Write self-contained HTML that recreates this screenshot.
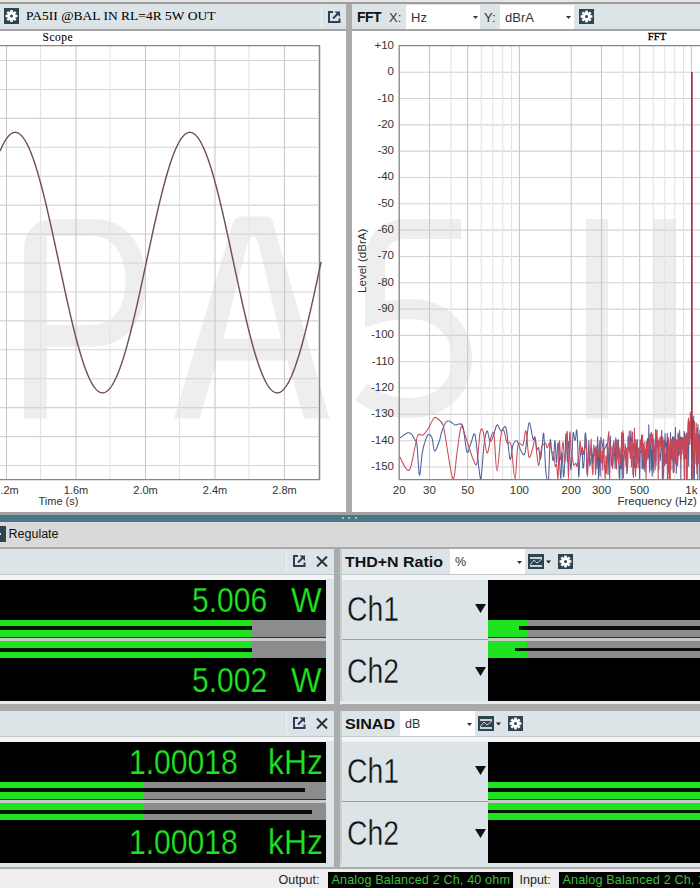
<!DOCTYPE html><html><head><meta charset="utf-8"><style>html,body{margin:0;padding:0;width:700px;height:888px;overflow:hidden;background:#dde4e7;position:relative}div{box-sizing:border-box}</style></head><body>
<div style="position:absolute;left:0px;top:0px;width:700px;height:1.5px;background:#e6e6e6;"></div>
<div style="position:absolute;left:0px;top:1.5px;width:700px;height:2.5px;background:#9d9d9d;"></div>
<div style="position:absolute;left:0px;top:4px;width:346px;height:25px;background:#dde4e7;"></div>
<div style="position:absolute;left:352px;top:4px;width:348px;height:25px;background:#dde4e7;"></div>
<div style="position:absolute;left:0px;top:29px;width:700px;height:2px;background:#a3a3a3;"></div>
<svg style="position:absolute;left:4px;top:8px" width="15" height="16" viewBox="0 0 15 16"><rect width="15" height="16" fill="#2d4451"/><rect x="6.20" y="2.10" width="2.6" height="3" fill="#fff" transform="rotate(0 7.5 8.0)"/><rect x="6.20" y="2.10" width="2.6" height="3" fill="#fff" transform="rotate(45 7.5 8.0)"/><rect x="6.20" y="2.10" width="2.6" height="3" fill="#fff" transform="rotate(90 7.5 8.0)"/><rect x="6.20" y="2.10" width="2.6" height="3" fill="#fff" transform="rotate(135 7.5 8.0)"/><rect x="6.20" y="2.10" width="2.6" height="3" fill="#fff" transform="rotate(180 7.5 8.0)"/><rect x="6.20" y="2.10" width="2.6" height="3" fill="#fff" transform="rotate(225 7.5 8.0)"/><rect x="6.20" y="2.10" width="2.6" height="3" fill="#fff" transform="rotate(270 7.5 8.0)"/><rect x="6.20" y="2.10" width="2.6" height="3" fill="#fff" transform="rotate(315 7.5 8.0)"/><circle cx="7.5" cy="8.0" r="4.2" fill="#fff"/><circle cx="7.5" cy="8.0" r="1.5" fill="#2d4451"/></svg>
<div style="position:absolute;left:26px;top:8.5px;font:13.5px 'Liberation Serif', serif;color:#000;white-space:nowrap;line-height:1;-webkit-text-stroke:0.05px #000">PA5II @BAL IN RL=4R 5W OUT</div>
<div style="position:absolute;left:321px;top:6px;width:1px;height:21px;background:#eef2f3;"></div>
<svg style="position:absolute;left:327.5px;top:10.5px" width="13" height="12" viewBox="0 0 13 12"><path d="M5,1 H1 V11 H11.5 V7.5" fill="none" stroke="#2b3f5a" stroke-width="2"/><path d="M5,7.5 L11,1.5" fill="none" stroke="#2b3f5a" stroke-width="2"/><path d="M6.5,0.5 H12 V6 Z" fill="#2b3f5a"/></svg>
<div style="position:absolute;left:357px;top:10px;font:bold 14px 'Liberation Sans', sans-serif;color:#111;white-space:nowrap;line-height:1;letter-spacing:-0.5px">FFT</div>
<div style="position:absolute;left:389px;top:10.5px;font:13px 'Liberation Sans', sans-serif;color:#333;white-space:nowrap;line-height:1;">X:</div>
<div style="position:absolute;left:406px;top:5px;width:74px;height:24px;background:#ffffff;"></div>
<div style="position:absolute;left:411px;top:11px;font:13px 'Liberation Sans', sans-serif;color:#333;white-space:nowrap;line-height:1;">Hz</div>
<svg style="position:absolute;left:473px;top:16px" width="5" height="3"><path d="M0,0H5L2.5,3Z" fill="#333"/></svg>
<div style="position:absolute;left:484px;top:10.5px;font:13px 'Liberation Sans', sans-serif;color:#333;white-space:nowrap;line-height:1;">Y:</div>
<div style="position:absolute;left:500px;top:5px;width:74px;height:24px;background:#ffffff;"></div>
<div style="position:absolute;left:505px;top:11px;font:13px 'Liberation Sans', sans-serif;color:#333;white-space:nowrap;line-height:1;">dBrA</div>
<svg style="position:absolute;left:566px;top:16px" width="5" height="3"><path d="M0,0H5L2.5,3Z" fill="#333"/></svg>
<svg style="position:absolute;left:579px;top:8.5px" width="15" height="15" viewBox="0 0 15 15"><rect width="15" height="15" fill="#2d4451"/><rect x="6.20" y="1.60" width="2.6" height="3" fill="#fff" transform="rotate(0 7.5 7.5)"/><rect x="6.20" y="1.60" width="2.6" height="3" fill="#fff" transform="rotate(45 7.5 7.5)"/><rect x="6.20" y="1.60" width="2.6" height="3" fill="#fff" transform="rotate(90 7.5 7.5)"/><rect x="6.20" y="1.60" width="2.6" height="3" fill="#fff" transform="rotate(135 7.5 7.5)"/><rect x="6.20" y="1.60" width="2.6" height="3" fill="#fff" transform="rotate(180 7.5 7.5)"/><rect x="6.20" y="1.60" width="2.6" height="3" fill="#fff" transform="rotate(225 7.5 7.5)"/><rect x="6.20" y="1.60" width="2.6" height="3" fill="#fff" transform="rotate(270 7.5 7.5)"/><rect x="6.20" y="1.60" width="2.6" height="3" fill="#fff" transform="rotate(315 7.5 7.5)"/><circle cx="7.5" cy="7.5" r="4.2" fill="#fff"/><circle cx="7.5" cy="7.5" r="1.5" fill="#2d4451"/></svg>
<div style="position:absolute;left:0px;top:31px;width:346px;height:481px;background:#ffffff;"></div>
<div style="position:absolute;left:352px;top:31px;width:348px;height:481px;background:#ffffff;"></div>
<div style="position:absolute;left:346px;top:4px;width:6px;height:508px;background:#a9abac;"></div>
<svg style="position:absolute;left:0;top:0" width="700" height="512" viewBox="0 0 700 512"><path fill="#eeeeee" fill-rule="evenodd" d="M24,418.5 V252 Q24,219 57,219 H94 C126,219 146,245 146,282.5 C146,320 126,346.5 94,346.5 H47 V418.5 Z M47,236 H92 C113,236 125.5,254 125.5,281 C125.5,308 113,325 92,325 H47 Z"/><path fill="#eeeeee" fill-rule="evenodd" d="M174,418.5 L233,222.5 Q235,216.6 242,216.6 L264,216.6 Q271,216.6 273,222.5 L329.5,418.5 L304,418.5 L287.3,360.5 L216.9,360.5 L199.5,418.5 Z M223.4,338.7 L248,241 Q253,232 258,241 L281,338.7 Z"/><g fill="none" stroke="#eeeeee" stroke-width="20"><path d="M461,229 H407 Q375,229 375,263 V314 C388,310 398,309 410,309 C441,309 462,330 462,358.5 C462,388 441,408 410,408 C390,408 373,401 361,392"/></g><rect x="586" y="219" width="22" height="199.5" fill="#eeeeee"/><rect x="653" y="219" width="23" height="199.5" fill="#eeeeee"/><line x1="0" y1="60.50" x2="319.6" y2="60.50" stroke="#d3d3d3" stroke-width="1.1"/><line x1="0" y1="89.43" x2="319.6" y2="89.43" stroke="#d3d3d3" stroke-width="1.1"/><line x1="0" y1="118.36" x2="319.6" y2="118.36" stroke="#d3d3d3" stroke-width="1.1"/><line x1="0" y1="147.29" x2="319.6" y2="147.29" stroke="#d3d3d3" stroke-width="1.1"/><line x1="0" y1="176.22" x2="319.6" y2="176.22" stroke="#d3d3d3" stroke-width="1.1"/><line x1="0" y1="205.15" x2="319.6" y2="205.15" stroke="#d3d3d3" stroke-width="1.1"/><line x1="0" y1="234.08" x2="319.6" y2="234.08" stroke="#d3d3d3" stroke-width="1.1"/><line x1="0" y1="263.01" x2="319.6" y2="263.01" stroke="#d3d3d3" stroke-width="1.1"/><line x1="0" y1="291.94" x2="319.6" y2="291.94" stroke="#d3d3d3" stroke-width="1.1"/><line x1="0" y1="320.87" x2="319.6" y2="320.87" stroke="#d3d3d3" stroke-width="1.1"/><line x1="0" y1="349.80" x2="319.6" y2="349.80" stroke="#d3d3d3" stroke-width="1.1"/><line x1="0" y1="378.73" x2="319.6" y2="378.73" stroke="#d3d3d3" stroke-width="1.1"/><line x1="0" y1="407.66" x2="319.6" y2="407.66" stroke="#d3d3d3" stroke-width="1.1"/><line x1="0" y1="436.59" x2="319.6" y2="436.59" stroke="#d3d3d3" stroke-width="1.1"/><line x1="0" y1="465.52" x2="319.6" y2="465.52" stroke="#d3d3d3" stroke-width="1.1"/><line x1="6.50" y1="45.7" x2="6.50" y2="479.6" stroke="#c9c9c9" stroke-width="1.1"/><line x1="40.50" y1="45.7" x2="40.50" y2="479.6" stroke="#e3e3e3" stroke-width="1.1"/><line x1="76.00" y1="45.7" x2="76.00" y2="479.6" stroke="#c9c9c9" stroke-width="1.1"/><line x1="110.00" y1="45.7" x2="110.00" y2="479.6" stroke="#e3e3e3" stroke-width="1.1"/><line x1="145.50" y1="45.7" x2="145.50" y2="479.6" stroke="#c9c9c9" stroke-width="1.1"/><line x1="179.50" y1="45.7" x2="179.50" y2="479.6" stroke="#e3e3e3" stroke-width="1.1"/><line x1="215.00" y1="45.7" x2="215.00" y2="479.6" stroke="#c9c9c9" stroke-width="1.1"/><line x1="249.00" y1="45.7" x2="249.00" y2="479.6" stroke="#e3e3e3" stroke-width="1.1"/><line x1="284.50" y1="45.7" x2="284.50" y2="479.6" stroke="#c9c9c9" stroke-width="1.1"/><line x1="318.50" y1="45.7" x2="318.50" y2="479.6" stroke="#e3e3e3" stroke-width="1.1"/><path d="M0,45.7 H319.6 V479.6 H0" fill="none" stroke="#858585" stroke-width="1.3"/><polyline points="0.0,151.09 0.5,149.90 1.0,148.74 1.5,147.62 2.0,146.54 2.5,145.50 3.0,144.49 3.5,143.52 4.0,142.59 4.5,141.70 5.0,140.85 5.5,140.04 6.0,139.26 6.5,138.53 7.0,137.84 7.5,137.19 8.0,136.57 8.5,136.00 9.0,135.47 9.5,134.98 10.0,134.53 10.5,134.13 11.0,133.76 11.5,133.44 12.0,133.16 12.5,132.92 13.0,132.72 13.5,132.57 14.0,132.45 14.5,132.38 15.0,132.35 15.5,132.36 16.0,132.42 16.5,132.52 17.0,132.65 17.5,132.83 18.0,133.06 18.5,133.32 19.0,133.63 19.5,133.98 20.0,134.37 20.5,134.80 21.0,135.27 21.5,135.79 22.0,136.34 22.5,136.94 23.0,137.57 23.5,138.25 24.0,138.97 24.5,139.72 25.0,140.52 25.5,141.36 26.0,142.23 26.5,143.15 27.0,144.10 27.5,145.09 28.0,146.12 28.5,147.19 29.0,148.29 29.5,149.43 30.0,150.61 30.5,151.82 31.0,153.07 31.5,154.36 32.0,155.68 32.5,157.03 33.0,158.42 33.5,159.84 34.0,161.30 34.5,162.79 35.0,164.31 35.5,165.86 36.0,167.45 36.5,169.06 37.0,170.71 37.5,172.38 38.0,174.09 38.5,175.82 39.0,177.58 39.5,179.37 40.0,181.18 40.5,183.02 41.0,184.89 41.5,186.78 42.0,188.70 42.5,190.64 43.0,192.60 43.5,194.59 44.0,196.60 44.5,198.63 45.0,200.68 45.5,202.75 46.0,204.84 46.5,206.95 47.0,209.07 47.5,211.22 48.0,213.38 48.5,215.55 49.0,217.75 49.5,219.95 50.0,222.17 50.5,224.41 51.0,226.65 51.5,228.91 52.0,231.18 52.5,233.45 53.0,235.74 53.5,238.04 54.0,240.34 54.5,242.65 55.0,244.97 55.5,247.29 56.0,249.62 56.5,251.95 57.0,254.29 57.5,256.63 58.0,258.97 58.5,261.31 59.0,263.65 59.5,266.00 60.0,268.34 60.5,270.68 61.0,273.01 61.5,275.34 62.0,277.67 62.5,280.00 63.0,282.32 63.5,284.63 64.0,286.93 64.5,289.23 65.0,291.52 65.5,293.80 66.0,296.07 66.5,298.32 67.0,300.57 67.5,302.80 68.0,305.03 68.5,307.23 69.0,309.43 69.5,311.60 70.0,313.77 70.5,315.91 71.0,318.04 71.5,320.15 72.0,322.24 72.5,324.32 73.0,326.37 73.5,328.40 74.0,330.41 74.5,332.40 75.0,334.37 75.5,336.31 76.0,338.23 76.5,340.12 77.0,341.99 77.5,343.84 78.0,345.65 78.5,347.44 79.0,349.21 79.5,350.94 80.0,352.65 80.5,354.33 81.0,355.98 81.5,357.59 82.0,359.18 82.5,360.74 83.0,362.26 83.5,363.75 84.0,365.21 84.5,366.64 85.0,368.03 85.5,369.39 86.0,370.71 86.5,372.00 87.0,373.25 87.5,374.47 88.0,375.65 88.5,376.80 89.0,377.91 89.5,378.98 90.0,380.01 90.5,381.00 91.0,381.96 91.5,382.88 92.0,383.76 92.5,384.60 93.0,385.40 93.5,386.16 94.0,386.88 94.5,387.56 95.0,388.20 95.5,388.80 96.0,389.36 96.5,389.88 97.0,390.36 97.5,390.79 98.0,391.19 98.5,391.54 99.0,391.85 99.5,392.12 100.0,392.34 100.5,392.53 101.0,392.67 101.5,392.77 102.0,392.83 102.5,392.85 103.0,392.82 103.5,392.76 104.0,392.65 104.5,392.50 105.0,392.30 105.5,392.07 106.0,391.79 106.5,391.47 107.0,391.11 107.5,390.71 108.0,390.26 108.5,389.78 109.0,389.25 109.5,388.69 110.0,388.08 110.5,387.43 111.0,386.74 111.5,386.01 112.0,385.24 112.5,384.43 113.0,383.59 113.5,382.70 114.0,381.77 114.5,380.81 115.0,379.81 115.5,378.77 116.0,377.69 116.5,376.57 117.0,375.42 117.5,374.23 118.0,373.01 118.5,371.75 119.0,370.45 119.5,369.12 120.0,367.75 120.5,366.35 121.0,364.92 121.5,363.46 122.0,361.96 122.5,360.43 123.0,358.87 123.5,357.27 124.0,355.65 124.5,353.99 125.0,352.31 125.5,350.60 126.0,348.86 126.5,347.09 127.0,345.29 127.5,343.47 128.0,341.62 128.5,339.75 129.0,337.85 129.5,335.92 130.0,333.97 130.5,332.00 131.0,330.01 131.5,328.00 132.0,325.96 132.5,323.90 133.0,321.83 133.5,319.73 134.0,317.62 134.5,315.48 135.0,313.34 135.5,311.17 136.0,308.99 136.5,306.79 137.0,304.58 137.5,302.36 138.0,300.12 138.5,297.87 139.0,295.61 139.5,293.34 140.0,291.06 140.5,288.77 141.0,286.47 141.5,284.17 142.0,281.85 142.5,279.53 143.0,277.21 143.5,274.88 144.0,272.54 144.5,270.21 145.0,267.87 145.5,265.53 146.0,263.19 146.5,260.84 147.0,258.50 147.5,256.16 148.0,253.82 148.5,251.49 149.0,249.16 149.5,246.83 150.0,244.51 150.5,242.19 151.0,239.88 151.5,237.58 152.0,235.28 152.5,233.00 153.0,230.72 153.5,228.46 154.0,226.20 154.5,223.96 155.0,221.73 155.5,219.51 156.0,217.31 156.5,215.12 157.0,212.94 157.5,210.79 158.0,208.65 158.5,206.52 159.0,204.42 159.5,202.33 160.0,200.27 160.5,198.22 161.0,196.19 161.5,194.19 162.0,192.21 162.5,190.25 163.0,188.31 163.5,186.40 164.0,184.51 164.5,182.65 165.0,180.82 165.5,179.01 166.0,177.22 166.5,175.47 167.0,173.74 167.5,172.04 168.0,170.38 168.5,168.74 169.0,167.13 169.5,165.55 170.0,164.00 170.5,162.49 171.0,161.01 171.5,159.56 172.0,158.14 172.5,156.76 173.0,155.41 173.5,154.10 174.0,152.82 174.5,151.58 175.0,150.37 175.5,149.20 176.0,148.07 176.5,146.97 177.0,145.91 177.5,144.89 178.0,143.90 178.5,142.96 179.0,142.05 179.5,141.19 180.0,140.36 180.5,139.57 181.0,138.82 181.5,138.11 182.0,137.44 182.5,136.81 183.0,136.23 183.5,135.68 184.0,135.17 184.5,134.71 185.0,134.29 185.5,133.90 186.0,133.56 186.5,133.27 187.0,133.01 187.5,132.80 188.0,132.62 188.5,132.49 189.0,132.40 189.5,132.36 190.0,132.35 190.5,132.39 191.0,132.47 191.5,132.59 192.0,132.76 192.5,132.96 193.0,133.21 193.5,133.50 194.0,133.83 194.5,134.21 195.0,134.62 195.5,135.08 196.0,135.57 196.5,136.11 197.0,136.69 197.5,137.31 198.0,137.97 198.5,138.67 199.0,139.42 199.5,140.20 200.0,141.02 200.5,141.88 201.0,142.78 201.5,143.71 202.0,144.69 202.5,145.70 203.0,146.75 203.5,147.84 204.0,148.97 204.5,150.13 205.0,151.33 205.5,152.57 206.0,153.84 206.5,155.15 207.0,156.49 207.5,157.86 208.0,159.27 208.5,160.71 209.0,162.19 209.5,163.70 210.0,165.24 210.5,166.81 211.0,168.41 211.5,170.05 212.0,171.71 212.5,173.40 213.0,175.12 213.5,176.87 214.0,178.65 214.5,180.45 215.0,182.28 215.5,184.14 216.0,186.02 216.5,187.93 217.0,189.86 217.5,191.81 218.0,193.79 218.5,195.79 219.0,197.81 219.5,199.86 220.0,201.92 220.5,204.00 221.0,206.10 221.5,208.22 222.0,210.36 222.5,212.51 223.0,214.68 223.5,216.87 224.0,219.07 224.5,221.28 225.0,223.51 225.5,225.75 226.0,228.00 226.5,230.27 227.0,232.54 227.5,234.82 228.0,237.12 228.5,239.42 229.0,241.73 229.5,244.04 230.0,246.36 230.5,248.69 231.0,251.02 231.5,253.36 232.0,255.69 232.5,258.03 233.0,260.37 233.5,262.72 234.0,265.06 234.5,267.40 235.0,269.74 235.5,272.08 236.0,274.41 236.5,276.74 237.0,279.07 237.5,281.39 238.0,283.70 238.5,286.01 239.0,288.31 239.5,290.60 240.0,292.89 240.5,295.16 241.0,297.42 241.5,299.67 242.0,301.91 242.5,304.14 243.0,306.35 243.5,308.55 244.0,310.74 244.5,312.90 245.0,315.06 245.5,317.19 246.0,319.31 246.5,321.41 247.0,323.49 247.5,325.55 248.0,327.59 248.5,329.61 249.0,331.61 249.5,333.58 250.0,335.53 250.5,337.46 251.0,339.37 251.5,341.25 252.0,343.10 252.5,344.93 253.0,346.73 253.5,348.51 254.0,350.25 254.5,351.97 255.0,353.66 255.5,355.32 256.0,356.95 256.5,358.55 257.0,360.12 257.5,361.65 258.0,363.16 258.5,364.63 259.0,366.07 259.5,367.48 260.0,368.85 260.5,370.19 261.0,371.49 261.5,372.76 262.0,373.99 262.5,375.18 263.0,376.34 263.5,377.47 264.0,378.55 264.5,379.60 265.0,380.61 265.5,381.58 266.0,382.52 266.5,383.41 267.0,384.27 267.5,385.08 268.0,385.86 268.5,386.60 269.0,387.29 269.5,387.95 270.0,388.57 270.5,389.14 271.0,389.68 271.5,390.17 272.0,390.62 272.5,391.03 273.0,391.40 273.5,391.73 274.0,392.02 274.5,392.26 275.0,392.46 275.5,392.62 276.0,392.74 276.5,392.81 277.0,392.85 277.5,392.84 278.0,392.79 278.5,392.70 279.0,392.56 279.5,392.39 280.0,392.17 280.5,391.91 281.0,391.60 281.5,391.26 282.0,390.87 282.5,390.45 283.0,389.98 283.5,389.47 284.0,388.92 284.5,388.33 285.0,387.69 285.5,387.02 286.0,386.31 286.5,385.55 287.0,384.76 287.5,383.93 288.0,383.06 288.5,382.15 289.0,381.20 289.5,380.21 290.0,379.19 290.5,378.12 291.0,377.02 291.5,375.88 292.0,374.71 292.5,373.50 293.0,372.25 293.5,370.97 294.0,369.66 294.5,368.30 295.0,366.92 295.5,365.50 296.0,364.05 296.5,362.56 297.0,361.04 297.5,359.49 298.0,357.91 298.5,356.30 299.0,354.66 299.5,352.99 300.0,351.29 300.5,349.56 301.0,347.80 301.5,346.01 302.0,344.20 302.5,342.36 303.0,340.50 303.5,338.61 304.0,336.69 304.5,334.76 305.0,332.79 305.5,330.81 306.0,328.80 306.5,326.78 307.0,324.73 307.5,322.66 308.0,320.57 308.5,318.46 309.0,316.34 309.5,314.20 310.0,312.04 310.5,309.86 311.0,307.67 311.5,305.47 312.0,303.25 312.5,301.02 313.0,298.77 313.5,296.52 314.0,294.25 314.5,291.97 315.0,289.69 315.5,287.39 316.0,285.09 316.5,282.78 317.0,280.46 317.5,278.14 318.0,275.81 318.5,273.48 319.0,271.14 319.5,268.80 320.0,266.46 320.5,264.12 321.0,261.78" fill="none" stroke="#b08890" stroke-width="0.8" transform="translate(0.5,0)"/><polyline points="0.0,151.09 0.5,149.90 1.0,148.74 1.5,147.62 2.0,146.54 2.5,145.50 3.0,144.49 3.5,143.52 4.0,142.59 4.5,141.70 5.0,140.85 5.5,140.04 6.0,139.26 6.5,138.53 7.0,137.84 7.5,137.19 8.0,136.57 8.5,136.00 9.0,135.47 9.5,134.98 10.0,134.53 10.5,134.13 11.0,133.76 11.5,133.44 12.0,133.16 12.5,132.92 13.0,132.72 13.5,132.57 14.0,132.45 14.5,132.38 15.0,132.35 15.5,132.36 16.0,132.42 16.5,132.52 17.0,132.65 17.5,132.83 18.0,133.06 18.5,133.32 19.0,133.63 19.5,133.98 20.0,134.37 20.5,134.80 21.0,135.27 21.5,135.79 22.0,136.34 22.5,136.94 23.0,137.57 23.5,138.25 24.0,138.97 24.5,139.72 25.0,140.52 25.5,141.36 26.0,142.23 26.5,143.15 27.0,144.10 27.5,145.09 28.0,146.12 28.5,147.19 29.0,148.29 29.5,149.43 30.0,150.61 30.5,151.82 31.0,153.07 31.5,154.36 32.0,155.68 32.5,157.03 33.0,158.42 33.5,159.84 34.0,161.30 34.5,162.79 35.0,164.31 35.5,165.86 36.0,167.45 36.5,169.06 37.0,170.71 37.5,172.38 38.0,174.09 38.5,175.82 39.0,177.58 39.5,179.37 40.0,181.18 40.5,183.02 41.0,184.89 41.5,186.78 42.0,188.70 42.5,190.64 43.0,192.60 43.5,194.59 44.0,196.60 44.5,198.63 45.0,200.68 45.5,202.75 46.0,204.84 46.5,206.95 47.0,209.07 47.5,211.22 48.0,213.38 48.5,215.55 49.0,217.75 49.5,219.95 50.0,222.17 50.5,224.41 51.0,226.65 51.5,228.91 52.0,231.18 52.5,233.45 53.0,235.74 53.5,238.04 54.0,240.34 54.5,242.65 55.0,244.97 55.5,247.29 56.0,249.62 56.5,251.95 57.0,254.29 57.5,256.63 58.0,258.97 58.5,261.31 59.0,263.65 59.5,266.00 60.0,268.34 60.5,270.68 61.0,273.01 61.5,275.34 62.0,277.67 62.5,280.00 63.0,282.32 63.5,284.63 64.0,286.93 64.5,289.23 65.0,291.52 65.5,293.80 66.0,296.07 66.5,298.32 67.0,300.57 67.5,302.80 68.0,305.03 68.5,307.23 69.0,309.43 69.5,311.60 70.0,313.77 70.5,315.91 71.0,318.04 71.5,320.15 72.0,322.24 72.5,324.32 73.0,326.37 73.5,328.40 74.0,330.41 74.5,332.40 75.0,334.37 75.5,336.31 76.0,338.23 76.5,340.12 77.0,341.99 77.5,343.84 78.0,345.65 78.5,347.44 79.0,349.21 79.5,350.94 80.0,352.65 80.5,354.33 81.0,355.98 81.5,357.59 82.0,359.18 82.5,360.74 83.0,362.26 83.5,363.75 84.0,365.21 84.5,366.64 85.0,368.03 85.5,369.39 86.0,370.71 86.5,372.00 87.0,373.25 87.5,374.47 88.0,375.65 88.5,376.80 89.0,377.91 89.5,378.98 90.0,380.01 90.5,381.00 91.0,381.96 91.5,382.88 92.0,383.76 92.5,384.60 93.0,385.40 93.5,386.16 94.0,386.88 94.5,387.56 95.0,388.20 95.5,388.80 96.0,389.36 96.5,389.88 97.0,390.36 97.5,390.79 98.0,391.19 98.5,391.54 99.0,391.85 99.5,392.12 100.0,392.34 100.5,392.53 101.0,392.67 101.5,392.77 102.0,392.83 102.5,392.85 103.0,392.82 103.5,392.76 104.0,392.65 104.5,392.50 105.0,392.30 105.5,392.07 106.0,391.79 106.5,391.47 107.0,391.11 107.5,390.71 108.0,390.26 108.5,389.78 109.0,389.25 109.5,388.69 110.0,388.08 110.5,387.43 111.0,386.74 111.5,386.01 112.0,385.24 112.5,384.43 113.0,383.59 113.5,382.70 114.0,381.77 114.5,380.81 115.0,379.81 115.5,378.77 116.0,377.69 116.5,376.57 117.0,375.42 117.5,374.23 118.0,373.01 118.5,371.75 119.0,370.45 119.5,369.12 120.0,367.75 120.5,366.35 121.0,364.92 121.5,363.46 122.0,361.96 122.5,360.43 123.0,358.87 123.5,357.27 124.0,355.65 124.5,353.99 125.0,352.31 125.5,350.60 126.0,348.86 126.5,347.09 127.0,345.29 127.5,343.47 128.0,341.62 128.5,339.75 129.0,337.85 129.5,335.92 130.0,333.97 130.5,332.00 131.0,330.01 131.5,328.00 132.0,325.96 132.5,323.90 133.0,321.83 133.5,319.73 134.0,317.62 134.5,315.48 135.0,313.34 135.5,311.17 136.0,308.99 136.5,306.79 137.0,304.58 137.5,302.36 138.0,300.12 138.5,297.87 139.0,295.61 139.5,293.34 140.0,291.06 140.5,288.77 141.0,286.47 141.5,284.17 142.0,281.85 142.5,279.53 143.0,277.21 143.5,274.88 144.0,272.54 144.5,270.21 145.0,267.87 145.5,265.53 146.0,263.19 146.5,260.84 147.0,258.50 147.5,256.16 148.0,253.82 148.5,251.49 149.0,249.16 149.5,246.83 150.0,244.51 150.5,242.19 151.0,239.88 151.5,237.58 152.0,235.28 152.5,233.00 153.0,230.72 153.5,228.46 154.0,226.20 154.5,223.96 155.0,221.73 155.5,219.51 156.0,217.31 156.5,215.12 157.0,212.94 157.5,210.79 158.0,208.65 158.5,206.52 159.0,204.42 159.5,202.33 160.0,200.27 160.5,198.22 161.0,196.19 161.5,194.19 162.0,192.21 162.5,190.25 163.0,188.31 163.5,186.40 164.0,184.51 164.5,182.65 165.0,180.82 165.5,179.01 166.0,177.22 166.5,175.47 167.0,173.74 167.5,172.04 168.0,170.38 168.5,168.74 169.0,167.13 169.5,165.55 170.0,164.00 170.5,162.49 171.0,161.01 171.5,159.56 172.0,158.14 172.5,156.76 173.0,155.41 173.5,154.10 174.0,152.82 174.5,151.58 175.0,150.37 175.5,149.20 176.0,148.07 176.5,146.97 177.0,145.91 177.5,144.89 178.0,143.90 178.5,142.96 179.0,142.05 179.5,141.19 180.0,140.36 180.5,139.57 181.0,138.82 181.5,138.11 182.0,137.44 182.5,136.81 183.0,136.23 183.5,135.68 184.0,135.17 184.5,134.71 185.0,134.29 185.5,133.90 186.0,133.56 186.5,133.27 187.0,133.01 187.5,132.80 188.0,132.62 188.5,132.49 189.0,132.40 189.5,132.36 190.0,132.35 190.5,132.39 191.0,132.47 191.5,132.59 192.0,132.76 192.5,132.96 193.0,133.21 193.5,133.50 194.0,133.83 194.5,134.21 195.0,134.62 195.5,135.08 196.0,135.57 196.5,136.11 197.0,136.69 197.5,137.31 198.0,137.97 198.5,138.67 199.0,139.42 199.5,140.20 200.0,141.02 200.5,141.88 201.0,142.78 201.5,143.71 202.0,144.69 202.5,145.70 203.0,146.75 203.5,147.84 204.0,148.97 204.5,150.13 205.0,151.33 205.5,152.57 206.0,153.84 206.5,155.15 207.0,156.49 207.5,157.86 208.0,159.27 208.5,160.71 209.0,162.19 209.5,163.70 210.0,165.24 210.5,166.81 211.0,168.41 211.5,170.05 212.0,171.71 212.5,173.40 213.0,175.12 213.5,176.87 214.0,178.65 214.5,180.45 215.0,182.28 215.5,184.14 216.0,186.02 216.5,187.93 217.0,189.86 217.5,191.81 218.0,193.79 218.5,195.79 219.0,197.81 219.5,199.86 220.0,201.92 220.5,204.00 221.0,206.10 221.5,208.22 222.0,210.36 222.5,212.51 223.0,214.68 223.5,216.87 224.0,219.07 224.5,221.28 225.0,223.51 225.5,225.75 226.0,228.00 226.5,230.27 227.0,232.54 227.5,234.82 228.0,237.12 228.5,239.42 229.0,241.73 229.5,244.04 230.0,246.36 230.5,248.69 231.0,251.02 231.5,253.36 232.0,255.69 232.5,258.03 233.0,260.37 233.5,262.72 234.0,265.06 234.5,267.40 235.0,269.74 235.5,272.08 236.0,274.41 236.5,276.74 237.0,279.07 237.5,281.39 238.0,283.70 238.5,286.01 239.0,288.31 239.5,290.60 240.0,292.89 240.5,295.16 241.0,297.42 241.5,299.67 242.0,301.91 242.5,304.14 243.0,306.35 243.5,308.55 244.0,310.74 244.5,312.90 245.0,315.06 245.5,317.19 246.0,319.31 246.5,321.41 247.0,323.49 247.5,325.55 248.0,327.59 248.5,329.61 249.0,331.61 249.5,333.58 250.0,335.53 250.5,337.46 251.0,339.37 251.5,341.25 252.0,343.10 252.5,344.93 253.0,346.73 253.5,348.51 254.0,350.25 254.5,351.97 255.0,353.66 255.5,355.32 256.0,356.95 256.5,358.55 257.0,360.12 257.5,361.65 258.0,363.16 258.5,364.63 259.0,366.07 259.5,367.48 260.0,368.85 260.5,370.19 261.0,371.49 261.5,372.76 262.0,373.99 262.5,375.18 263.0,376.34 263.5,377.47 264.0,378.55 264.5,379.60 265.0,380.61 265.5,381.58 266.0,382.52 266.5,383.41 267.0,384.27 267.5,385.08 268.0,385.86 268.5,386.60 269.0,387.29 269.5,387.95 270.0,388.57 270.5,389.14 271.0,389.68 271.5,390.17 272.0,390.62 272.5,391.03 273.0,391.40 273.5,391.73 274.0,392.02 274.5,392.26 275.0,392.46 275.5,392.62 276.0,392.74 276.5,392.81 277.0,392.85 277.5,392.84 278.0,392.79 278.5,392.70 279.0,392.56 279.5,392.39 280.0,392.17 280.5,391.91 281.0,391.60 281.5,391.26 282.0,390.87 282.5,390.45 283.0,389.98 283.5,389.47 284.0,388.92 284.5,388.33 285.0,387.69 285.5,387.02 286.0,386.31 286.5,385.55 287.0,384.76 287.5,383.93 288.0,383.06 288.5,382.15 289.0,381.20 289.5,380.21 290.0,379.19 290.5,378.12 291.0,377.02 291.5,375.88 292.0,374.71 292.5,373.50 293.0,372.25 293.5,370.97 294.0,369.66 294.5,368.30 295.0,366.92 295.5,365.50 296.0,364.05 296.5,362.56 297.0,361.04 297.5,359.49 298.0,357.91 298.5,356.30 299.0,354.66 299.5,352.99 300.0,351.29 300.5,349.56 301.0,347.80 301.5,346.01 302.0,344.20 302.5,342.36 303.0,340.50 303.5,338.61 304.0,336.69 304.5,334.76 305.0,332.79 305.5,330.81 306.0,328.80 306.5,326.78 307.0,324.73 307.5,322.66 308.0,320.57 308.5,318.46 309.0,316.34 309.5,314.20 310.0,312.04 310.5,309.86 311.0,307.67 311.5,305.47 312.0,303.25 312.5,301.02 313.0,298.77 313.5,296.52 314.0,294.25 314.5,291.97 315.0,289.69 315.5,287.39 316.0,285.09 316.5,282.78 317.0,280.46 317.5,278.14 318.0,275.81 318.5,273.48 319.0,271.14 319.5,268.80 320.0,266.46 320.5,264.12 321.0,261.78" fill="none" stroke="#6a4a52" stroke-width="1.2"/><line x1="399.2" y1="72.20" x2="700" y2="72.20" stroke="#d3d3d3" stroke-width="1.1"/><line x1="399.2" y1="98.52" x2="700" y2="98.52" stroke="#d3d3d3" stroke-width="1.1"/><line x1="399.2" y1="124.84" x2="700" y2="124.84" stroke="#d3d3d3" stroke-width="1.1"/><line x1="399.2" y1="151.16" x2="700" y2="151.16" stroke="#d3d3d3" stroke-width="1.1"/><line x1="399.2" y1="177.48" x2="700" y2="177.48" stroke="#d3d3d3" stroke-width="1.1"/><line x1="399.2" y1="203.80" x2="700" y2="203.80" stroke="#d3d3d3" stroke-width="1.1"/><line x1="399.2" y1="230.12" x2="700" y2="230.12" stroke="#d3d3d3" stroke-width="1.1"/><line x1="399.2" y1="256.44" x2="700" y2="256.44" stroke="#d3d3d3" stroke-width="1.1"/><line x1="399.2" y1="282.76" x2="700" y2="282.76" stroke="#d3d3d3" stroke-width="1.1"/><line x1="399.2" y1="309.08" x2="700" y2="309.08" stroke="#d3d3d3" stroke-width="1.1"/><line x1="399.2" y1="335.40" x2="700" y2="335.40" stroke="#d3d3d3" stroke-width="1.1"/><line x1="399.2" y1="361.72" x2="700" y2="361.72" stroke="#d3d3d3" stroke-width="1.1"/><line x1="399.2" y1="388.04" x2="700" y2="388.04" stroke="#d3d3d3" stroke-width="1.1"/><line x1="399.2" y1="414.36" x2="700" y2="414.36" stroke="#d3d3d3" stroke-width="1.1"/><line x1="399.2" y1="440.68" x2="700" y2="440.68" stroke="#d3d3d3" stroke-width="1.1"/><line x1="399.2" y1="467.00" x2="700" y2="467.00" stroke="#d3d3d3" stroke-width="1.1"/><line x1="429.49" y1="45.7" x2="429.49" y2="479.6" stroke="#c9c9c9" stroke-width="1.1"/><line x1="450.98" y1="45.7" x2="450.98" y2="479.6" stroke="#e3e3e3" stroke-width="1.1"/><line x1="467.65" y1="45.7" x2="467.65" y2="479.6" stroke="#c9c9c9" stroke-width="1.1"/><line x1="481.26" y1="45.7" x2="481.26" y2="479.6" stroke="#e3e3e3" stroke-width="1.1"/><line x1="492.78" y1="45.7" x2="492.78" y2="479.6" stroke="#e3e3e3" stroke-width="1.1"/><line x1="502.75" y1="45.7" x2="502.75" y2="479.6" stroke="#e3e3e3" stroke-width="1.1"/><line x1="511.55" y1="45.7" x2="511.55" y2="479.6" stroke="#e3e3e3" stroke-width="1.1"/><line x1="519.42" y1="45.7" x2="519.42" y2="479.6" stroke="#c9c9c9" stroke-width="1.1"/><line x1="571.20" y1="45.7" x2="571.20" y2="479.6" stroke="#c9c9c9" stroke-width="1.1"/><line x1="601.49" y1="45.7" x2="601.49" y2="479.6" stroke="#c9c9c9" stroke-width="1.1"/><line x1="622.98" y1="45.7" x2="622.98" y2="479.6" stroke="#e3e3e3" stroke-width="1.1"/><line x1="639.65" y1="45.7" x2="639.65" y2="479.6" stroke="#c9c9c9" stroke-width="1.1"/><line x1="653.26" y1="45.7" x2="653.26" y2="479.6" stroke="#e3e3e3" stroke-width="1.1"/><line x1="664.78" y1="45.7" x2="664.78" y2="479.6" stroke="#e3e3e3" stroke-width="1.1"/><line x1="674.75" y1="45.7" x2="674.75" y2="479.6" stroke="#e3e3e3" stroke-width="1.1"/><line x1="683.55" y1="45.7" x2="683.55" y2="479.6" stroke="#e3e3e3" stroke-width="1.1"/><line x1="691.42" y1="45.7" x2="691.42" y2="479.6" stroke="#c9c9c9" stroke-width="1.1"/><line x1="743.20" y1="45.7" x2="743.20" y2="479.6" stroke="#e3e3e3" stroke-width="1.1"/><path d="M700,45.7 H399.2 V479.6 H700" fill="none" stroke="#858585" stroke-width="1.3"/><clipPath id="fc"><rect x="399.2" y="45.7" width="300.8" height="433.90000000000003"/></clipPath><g clip-path="url(#fc)" fill="none" stroke-linejoin="round"><path d="M400.00,438.00 C401.17,437.17 405.17,433.73 407.00,433.00 C408.83,432.27 409.67,432.43 411.00,433.60 C412.33,434.77 414.00,438.10 415.00,440.00 C416.00,441.90 416.27,439.17 417.00,445.00 C417.73,450.83 418.57,473.33 419.40,475.00 C420.23,476.67 421.23,460.00 422.00,455.00 C422.77,450.00 423.00,448.40 424.00,445.00 C425.00,441.60 426.67,435.77 428.00,434.60 C429.33,433.43 430.90,435.27 432.00,438.00 C433.10,440.73 433.43,450.33 434.60,451.00 C435.77,451.67 437.77,445.33 439.00,442.00 C440.23,438.67 440.83,434.33 442.00,431.00 C443.17,427.67 444.67,423.60 446.00,422.00 C447.33,420.40 448.50,420.90 450.00,421.40 C451.50,421.90 453.50,424.57 455.00,425.00 C456.50,425.43 457.67,423.67 459.00,424.00 C460.33,424.33 461.67,422.33 463.00,427.00 C464.33,431.67 465.67,449.33 467.00,452.00 C468.33,454.67 469.67,445.83 471.00,443.00 C472.33,440.17 473.67,430.67 475.00,435.00 C476.33,439.33 478.00,461.67 479.00,469.00 C480.00,476.33 480.17,479.60 481.00,479.00 C481.83,475.00 483.00,453.00 484.00,445.00 C485.00,437.00 486.00,431.67 487.00,431.00 C488.00,430.33 489.00,440.00 490.00,441.00 C491.00,442.00 491.83,439.67 493.00,437.00 C494.17,434.33 495.67,426.00 497.00,425.00 C498.33,424.00 499.50,430.50 501.00,431.00 C502.50,431.50 504.50,423.33 506.00,428.00 C507.50,432.67 508.83,456.17 510.00,459.00 C511.17,461.83 511.83,448.00 513.00,445.00 C514.17,442.00 515.67,440.00 517.00,441.00 C518.33,442.00 519.67,449.00 521.00,451.00 C522.33,453.00 523.67,457.67 525.00,453.00 C526.33,448.33 527.67,425.33 529.00,423.00 C530.33,420.67 532.01,436.67 533.00,439.00 C533.99,441.33 534.31,435.29 534.95,436.98 C535.59,438.68 536.24,447.37 536.85,449.18 C537.46,450.99 537.99,446.13 538.61,447.83 C539.22,449.52 539.94,459.70 540.54,459.36 C541.13,459.02 541.64,450.04 542.17,445.79 C542.71,441.54 543.20,430.21 543.76,433.88 C544.31,437.55 544.97,460.21 545.52,467.82 C546.06,475.42 546.52,477.56 547.02,479.53 C547.53,479.60 548.04,479.60 548.56,479.60 C549.08,473.11 549.62,445.20 550.15,440.56 C550.67,435.92 551.19,448.46 551.72,451.76 C552.25,455.05 552.77,462.21 553.30,460.35 C553.84,458.48 554.43,440.16 554.96,440.58 C555.49,440.99 556.00,462.41 556.49,462.84 C556.97,463.28 557.41,444.39 557.87,443.19 C558.33,441.99 558.77,449.56 559.26,455.63 C559.74,461.70 560.30,479.60 560.77,479.60 C561.24,479.09 561.60,453.05 562.05,452.59 C562.51,452.14 563.05,475.53 563.52,476.86 C563.99,478.19 564.45,467.79 564.87,460.58 C565.29,453.37 565.63,433.41 566.05,433.60 C566.47,433.80 566.97,460.36 567.39,461.75 C567.80,463.15 568.15,443.38 568.53,441.97 C568.92,440.55 569.30,448.63 569.68,453.25 C570.07,457.88 570.43,469.56 570.82,469.71 C571.21,469.86 571.66,460.32 572.05,454.16 C572.43,448.01 572.76,435.41 573.15,432.79 C573.54,430.16 573.99,437.25 574.38,438.40 C574.76,439.55 575.08,441.12 575.45,439.70 C575.82,438.28 576.23,429.39 576.60,429.89 C576.97,430.38 577.29,434.89 577.64,442.67 C577.99,450.45 578.35,473.39 578.69,476.57 C579.03,479.60 579.33,465.69 579.68,461.75 C580.02,457.80 580.39,455.03 580.76,452.88 C581.13,450.74 581.52,446.45 581.90,448.89 C582.27,451.33 582.64,465.44 583.00,467.51 C583.37,469.58 583.76,466.72 584.10,461.33 C584.44,455.95 584.72,439.03 585.03,435.20 C585.35,431.37 585.64,432.16 585.96,438.34 C586.28,444.53 586.65,468.37 586.96,472.29 C587.27,476.21 587.52,467.14 587.83,461.87 L588.82,440.69 L589.78,465.79 L590.74,462.39 L591.67,447.50 L592.53,463.83 L593.34,452.95 L594.14,455.78 L595.03,456.03 L595.96,446.11 L596.85,468.46 L597.61,436.80 L598.48,479.60 L599.33,443.73 L600.11,475.94 L600.93,437.26 L601.76,441.59 L602.62,445.13 L603.46,453.81 L604.28,448.60 L605.06,448.28 L605.83,446.50 L606.65,443.69 L607.38,448.30 L608.10,474.54 L608.86,447.64 L609.58,444.60 L610.29,436.04 L610.96,458.39 L611.69,465.88 L612.43,452.79 L613.17,445.57 L613.81,440.95 L614.54,454.86 L615.21,468.55 L615.87,439.31 L616.56,459.45 L617.16,459.52 L617.77,446.75 L618.41,439.65 L619.10,475.74 L619.67,479.60 L620.31,457.88 L620.97,468.49 L621.57,439.96 L622.15,479.60 L622.77,446.54 L623.38,433.23 L623.99,451.47 L624.54,451.56 L625.15,459.53 L625.71,449.95 L626.30,454.34 L626.90,473.77 L627.52,468.94 L628.07,436.35 L628.61,437.82 L629.20,451.78 L629.76,443.54 L630.34,443.67 L630.85,430.68 L631.44,441.22 L631.95,438.78 L632.46,452.52 L632.99,450.92 L633.46,477.34 L634.01,456.55 L634.55,467.17 L635.07,439.36 L635.59,450.71 L636.14,462.10 L636.64,443.21 L637.15,439.18 L637.65,454.63 L638.17,462.86 L638.69,449.62 L639.18,449.24 L639.66,479.60 L640.18,453.86 L640.68,450.68 L641.17,449.12 L641.63,435.39 L642.07,468.99 L642.53,436.60 L642.99,463.86 L643.45,468.73 L643.93,463.67 L644.36,456.94 L644.79,471.28 L645.26,449.97 L645.68,449.31 L646.11,453.29 L646.55,462.97 L647.00,449.32 L647.46,438.49 L647.86,440.26 L648.33,457.18 L648.79,424.83 L649.24,460.87 L649.68,472.14 L650.12,440.96 L650.51,444.38 L650.88,444.46 L651.32,470.01 L651.73,450.11 L652.15,475.90 L652.52,448.52 L652.93,467.05 L653.30,439.05 L653.74,472.29 L654.10,451.43 L654.51,451.26 L654.90,446.93 L655.25,438.86 L655.62,442.56 L655.99,465.51 L656.38,436.73 L656.78,438.16 L657.17,446.92 L657.55,440.29 L657.90,442.35 L658.30,453.36 L658.70,443.92 L659.09,453.34 L659.47,455.83 L659.84,455.25 L660.21,461.06 L660.60,455.97 L660.98,448.94 L661.33,445.50 L661.70,430.20 L662.02,442.43 L662.36,479.60 L662.69,471.69 L663.02,448.34 L663.37,447.76 L663.75,439.97 L664.07,441.70 L664.38,465.70 L664.72,450.06 L665.07,433.51 L665.40,446.76 L665.73,444.97 L666.07,443.02 L666.39,460.16 L666.70,441.75 L667.02,441.95 L667.32,433.48 L667.62,452.20 L667.95,460.16 L668.28,442.72 L668.60,439.51 L668.93,445.78 L669.25,478.99 L669.57,451.62 L669.90,459.08 L670.23,440.78 L670.55,432.68 L670.88,469.55 L671.21,445.60 L671.52,443.70 L671.83,445.29 L672.16,459.59 L672.50,436.72 L672.78,458.40 L673.08,470.63 L673.39,472.64 L673.70,445.16 L673.99,461.57 L674.29,438.18 L674.56,439.24 L674.87,461.29 L675.16,439.12 L675.45,427.61 L675.73,441.21 L676.05,453.62 L676.32,473.33 L676.59,449.34 L676.89,440.00 L677.16,443.59 L677.42,441.54 L677.72,465.75 L678.00,453.27 L678.26,446.19 L678.57,433.91 L678.85,455.61 L679.12,432.47 L679.43,452.98 L679.70,451.57 L679.97,445.74 L680.27,436.69 L680.55,439.32 L680.85,479.60 L681.12,445.07 L681.42,437.28 L681.67,437.71 L681.92,439.26 L682.21,442.31 L682.46,441.66 L682.72,437.75 L682.99,449.66 L683.24,440.30 L683.51,438.52 L683.79,448.33 L684.07,433.29 L684.35,431.45 L684.63,443.51 L684.91,446.64 L685.16,435.97 L685.45,458.39 L685.69,450.79 L685.97,449.58 L686.21,433.17 L686.45,442.91 L686.71,474.50 L686.94,452.43 L687.18,437.00 L687.42,447.96 L687.66,445.97 L687.91,438.93 L688.15,423.13 L688.39,419.59 L688.64,465.95 L688.91,439.29 L689.16,443.16 L689.43,444.07 L689.65,437.04 L689.91,427.99 L690.13,436.97 L690.36,428.72 L690.61,437.19 L690.86,418.08 L691.07,414.09 L691.33,432.93 L691.58,424.92 L691.81,422.90 L692.07,417.86 L692.30,451.04 L692.55,428.23 L692.79,419.96 L693.01,456.60 L693.24,425.96 L693.46,454.53 L693.69,416.34 L693.94,479.60 L694.16,446.96 L694.40,479.60 L694.65,450.29 L694.88,442.84 L695.11,445.03 L695.33,449.36 L695.55,446.47 L695.79,433.67 L696.01,463.72 L696.22,436.04 L696.45,445.52 L696.69,465.34 L696.90,461.84 L697.12,428.47 L697.34,438.97 L697.57,448.00 L697.78,479.60 L698.00,424.49 L698.23,441.40 L698.42,450.85 L698.65,449.68 L698.86,435.03 L699.09,437.33 L699.32,451.35 L699.53,439.48 L699.77,439.61 L700.00,430.24 L700.21,470.49 L700.42,440.68 L700.62,452.02 L700.83,428.23" stroke="#4f5f9c" stroke-width="1.05"/><path d="M400.00,457.00 C400.83,458.67 403.33,465.00 405.00,467.00 C406.67,469.00 408.33,472.33 410.00,469.00 C411.67,465.67 413.67,452.67 415.00,447.00 C416.33,441.33 416.67,437.00 418.00,435.00 C419.33,433.00 421.33,436.00 423.00,435.00 C424.67,434.00 426.17,431.83 428.00,429.00 C429.83,426.17 432.33,419.67 434.00,418.00 C435.67,416.33 436.50,417.83 438.00,419.00 C439.50,420.17 441.67,421.33 443.00,425.00 C444.33,428.67 444.33,432.00 446.00,441.00 C447.67,450.00 451.17,477.00 453.00,479.00 C454.83,479.60 455.67,461.67 457.00,453.00 C458.33,444.33 459.67,430.00 461.00,427.00 C462.33,424.00 463.00,429.67 465.00,435.00 C467.00,440.33 471.00,454.33 473.00,459.00 C475.00,463.67 475.83,467.33 477.00,463.00 C478.17,458.67 479.00,438.33 480.00,433.00 C481.00,427.67 481.83,427.67 483.00,431.00 C484.17,434.33 485.67,452.00 487.00,453.00 C488.33,454.00 489.83,440.00 491.00,437.00 C492.17,434.00 493.00,429.33 494.00,435.00 C495.00,440.67 495.83,471.00 497.00,471.00 C498.17,471.00 499.83,441.67 501.00,435.00 C502.17,428.33 503.00,429.67 504.00,431.00 C505.00,432.33 505.83,440.67 507.00,443.00 C508.17,445.33 509.67,439.00 511.00,445.00 C512.33,451.00 513.83,479.00 515.00,479.00 C516.17,479.00 516.67,450.67 518.00,445.00 C519.33,439.33 521.67,447.33 523.00,445.00 C524.33,442.67 525.00,429.00 526.00,431.00 C527.00,433.00 527.83,454.33 529.00,457.00 C530.17,459.67 531.98,450.06 533.00,447.00 C534.02,443.94 534.48,437.38 535.13,438.65 C535.78,439.91 536.28,450.13 536.89,454.59 C537.49,459.06 538.15,465.62 538.77,465.42 C539.38,465.23 540.00,456.79 540.57,453.43 C541.14,450.07 541.63,446.76 542.18,445.26 C542.74,443.77 543.33,444.87 543.90,444.46 C544.46,444.05 544.99,442.22 545.55,442.80 C546.11,443.39 546.67,447.85 547.25,447.97 C547.83,448.10 548.47,443.75 549.03,443.54 C549.58,443.33 550.07,445.18 550.58,446.69 C551.09,448.20 551.56,451.47 552.08,452.61 C552.59,453.74 553.15,451.25 553.67,453.50 C554.20,455.74 554.72,464.19 555.21,466.09 C555.70,468.00 556.17,462.66 556.63,464.91 C557.08,467.16 557.51,479.60 557.95,479.60 C558.40,475.66 558.86,444.56 559.31,441.25 C559.75,437.94 560.21,458.28 560.65,459.74 C561.09,461.20 561.53,452.88 561.96,450.01 C562.39,447.13 562.79,440.47 563.23,442.51 C563.68,444.55 564.16,461.24 564.61,462.25 C565.05,463.26 565.46,453.54 565.91,448.57 C566.36,443.59 566.88,427.23 567.30,432.40 C567.72,437.57 568.03,479.58 568.44,479.60 C568.84,479.60 569.31,437.42 569.74,432.52 C570.17,427.62 570.59,446.11 571.02,450.20 C571.45,454.28 571.90,454.59 572.33,457.03 C572.76,459.46 573.22,463.55 573.60,464.80 C573.99,466.06 574.28,464.81 574.66,464.57 C575.04,464.33 575.51,463.04 575.89,463.35 C576.26,463.65 576.56,466.75 576.91,466.40 C577.27,466.05 577.66,463.44 578.02,461.24 C578.38,459.04 578.74,456.55 579.09,453.20 C579.44,449.86 579.76,441.00 580.12,441.19 C580.48,441.37 580.89,453.37 581.26,454.32 C581.63,455.26 581.99,446.85 582.33,446.86 C582.68,446.87 582.97,453.93 583.30,454.40 C583.64,454.86 584.01,450.85 584.37,449.63 C584.72,448.41 585.09,448.63 585.43,447.07 C585.76,445.51 586.07,435.52 586.38,440.28 C586.69,445.04 586.98,472.00 587.30,475.63 C587.61,479.25 587.95,465.84 588.27,462.05 L589.22,452.88 L590.20,455.52 L591.17,438.92 L592.03,465.92 L592.92,475.06 L593.84,445.14 L594.72,450.24 L595.56,474.37 L596.48,451.14 L597.37,447.70 L598.17,456.50 L598.97,456.82 L599.77,440.79 L600.58,460.76 L601.35,462.88 L602.10,450.90 L602.83,470.19 L603.62,439.11 L604.35,461.12 L605.19,479.60 L605.99,455.86 L606.68,473.66 L607.45,445.23 L608.16,436.37 L608.90,431.61 L609.68,479.60 L610.41,443.52 L611.11,448.59 L611.84,447.55 L612.54,468.78 L613.17,463.38 L613.84,447.00 L614.52,452.97 L615.17,443.02 L615.88,437.69 L616.60,469.18 L617.23,439.98 L617.82,443.65 L618.49,463.02 L619.11,457.61 L619.72,447.85 L620.34,457.61 L620.97,465.48 L621.62,432.41 L622.23,453.15 L622.85,430.68 L623.46,477.75 L624.09,454.79 L624.63,454.48 L625.27,444.03 L625.86,465.73 L626.45,447.79 L627.02,469.78 L627.53,467.54 L628.11,446.75 L628.69,449.54 L629.21,431.07 L629.73,450.77 L630.28,458.36 L630.87,441.25 L631.41,466.86 L631.97,445.24 L632.45,432.02 L632.94,474.81 L633.42,443.55 L633.98,450.10 L634.47,428.15 L635.00,463.59 L635.53,476.11 L636.06,462.34 L636.52,467.68 L637.06,440.47 L637.58,448.12 L638.10,467.91 L638.62,447.73 L639.10,453.37 L639.61,456.83 L640.11,439.57 L640.55,440.91 L640.99,447.71 L641.50,452.84 L641.97,449.63 L642.43,434.86 L642.92,459.56 L643.39,443.45 L643.88,468.90 L644.33,462.96 L644.78,441.79 L645.19,454.96 L645.66,466.12 L646.11,479.60 L646.55,441.50 L647.01,448.29 L647.45,452.08 L647.84,459.52 L648.29,441.36 L648.70,452.72 L649.12,453.60 L649.56,442.88 L649.95,433.92 L650.32,441.36 L650.75,442.86 L651.19,432.32 L651.63,435.13 L652.01,449.23 L652.41,445.88 L652.83,433.78 L653.22,446.98 L653.61,466.45 L653.96,457.75 L654.32,455.56 L654.75,444.93 L655.17,469.85 L655.56,429.53 L655.94,460.40 L656.29,444.03 L656.66,431.23 L657.05,429.83 L657.40,442.31 L657.80,448.68 L658.18,479.50 L658.54,440.74 L658.88,469.86 L659.22,437.90 L659.58,444.68 L659.93,442.20 L660.29,446.23 L660.68,436.24 L661.06,449.86 L661.43,442.72 L661.81,448.66 L662.18,450.74 L662.55,438.53 L662.89,436.93 L663.25,479.60 L663.63,470.38 L664.01,441.72 L664.37,449.19 L664.69,452.14 L665.05,462.50 L665.39,453.13 L665.75,464.16 L666.11,460.47 L666.46,462.72 L666.76,463.27 L667.12,448.51 L667.43,479.60 L667.75,479.60 L668.08,450.29 L668.41,437.58 L668.72,467.81 L669.02,473.36 L669.32,472.97 L669.67,449.79 L669.98,479.60 L670.27,479.60 L670.59,438.12 L670.87,456.60 L671.19,441.51 L671.53,444.29 L671.87,439.18 L672.18,440.05 L672.51,456.39 L672.84,456.45 L673.17,459.93 L673.50,437.01 L673.79,443.28 L674.12,471.68 L674.42,451.83 L674.70,447.01 L674.97,453.07 L675.24,435.29 L675.51,463.64 L675.82,441.22 L676.14,464.32 L676.42,439.94 L676.69,441.25 L677.01,464.65 L677.31,462.17 L677.60,460.43 L677.88,433.86 L678.17,441.52 L678.44,440.01 L678.74,446.91 L679.00,443.63 L679.31,453.95 L679.60,430.28 L679.89,435.34 L680.14,449.14 L680.44,460.50 L680.70,439.46 L680.99,458.82 L681.27,446.29 L681.53,440.97 L681.79,444.78 L682.09,453.94 L682.35,446.87 L682.63,439.34 L682.90,445.95 L683.17,442.12 L683.43,442.51 L683.69,459.69 L683.93,439.09 L684.17,467.85 L684.42,479.60 L684.68,437.03 L684.94,441.68 L685.22,447.71 L685.48,437.06 L685.73,449.55 L685.97,434.51 L686.21,479.60 L686.47,465.97 L686.75,433.02 L687.02,479.60 L687.26,479.35 L687.52,444.18 L687.79,447.07 L688.02,426.42 L688.27,425.01 L688.52,418.24 L688.75,422.75 L689.01,424.27 L689.27,443.16 L689.52,421.86 L689.77,425.02 L690.00,444.17 L690.25,412.00 L690.48,417.72 L690.72,438.44 L690.95,419.47 L691.19,420.02 L691.43,425.19 L691.69,419.82 L691.93,428.82 L692.17,453.56 L692.39,458.82 L692.62,431.45 L692.84,432.82 L693.07,432.31 L693.31,477.92 L693.54,429.80 L693.77,429.20 L694.02,468.44 L694.23,440.28 L694.48,421.38 L694.72,427.25 L694.95,452.61 L695.19,446.85 L695.39,447.53 L695.60,445.86 L695.80,449.00 L696.02,447.39 L696.22,422.94 L696.43,439.36 L696.65,451.73 L696.86,473.83 L697.07,434.61 L697.28,449.87 L697.52,430.47 L697.74,461.93 L697.95,435.52 L698.19,447.92 L698.39,463.38 L698.59,447.65 L698.82,437.25 L699.03,448.79 L699.24,454.70 L699.47,446.03 L699.67,479.27 L699.89,447.77 L700.08,479.60 L700.31,433.87 L700.54,442.98 L700.75,451.38 L700.98,445.29" stroke="#c84858" stroke-width="1.05"/></g><line x1="691.92" y1="72" x2="691.92" y2="479.6" stroke="#9a3848" stroke-width="1.7"/></svg>
<div style="position:absolute;left:42.5px;top:32px;font:11.5px 'Liberation Serif', serif;color:#000;white-space:nowrap;line-height:1;letter-spacing:0.5px;-webkit-text-stroke:0.1px #000">Scope</div>
<div style="position:absolute;left:-23.5px;top:484.5px;font:11px 'Liberation Sans', sans-serif;color:#333;white-space:nowrap;line-height:1;width:60px;text-align:center">1.2m</div>
<div style="position:absolute;left:46px;top:484.5px;font:11px 'Liberation Sans', sans-serif;color:#333;white-space:nowrap;line-height:1;width:60px;text-align:center">1.6m</div>
<div style="position:absolute;left:115.5px;top:484.5px;font:11px 'Liberation Sans', sans-serif;color:#333;white-space:nowrap;line-height:1;width:60px;text-align:center">2.0m</div>
<div style="position:absolute;left:185px;top:484.5px;font:11px 'Liberation Sans', sans-serif;color:#333;white-space:nowrap;line-height:1;width:60px;text-align:center">2.4m</div>
<div style="position:absolute;left:254.5px;top:484.5px;font:11px 'Liberation Sans', sans-serif;color:#333;white-space:nowrap;line-height:1;width:60px;text-align:center">2.8m</div>
<div style="position:absolute;left:38.5px;top:495.5px;font:11px 'Liberation Sans', sans-serif;color:#333;white-space:nowrap;line-height:1;">Time (s)</div>
<div style="position:absolute;left:647.8px;top:31px;font:10.8px 'Liberation Serif', serif;color:#000;white-space:nowrap;line-height:1;letter-spacing:0px;-webkit-text-stroke:0.3px #000">FFT</div>
<div style="position:absolute;left:343px;top:39.88px;font:11.5px 'Liberation Sans', sans-serif;color:#333;white-space:nowrap;line-height:1;width:51px;text-align:right">+10</div>
<div style="position:absolute;left:343px;top:66.2px;font:11.5px 'Liberation Sans', sans-serif;color:#333;white-space:nowrap;line-height:1;width:51px;text-align:right">0</div>
<div style="position:absolute;left:343px;top:92.52000000000001px;font:11.5px 'Liberation Sans', sans-serif;color:#333;white-space:nowrap;line-height:1;width:51px;text-align:right">-10</div>
<div style="position:absolute;left:343px;top:118.84px;font:11.5px 'Liberation Sans', sans-serif;color:#333;white-space:nowrap;line-height:1;width:51px;text-align:right">-20</div>
<div style="position:absolute;left:343px;top:145.16000000000003px;font:11.5px 'Liberation Sans', sans-serif;color:#333;white-space:nowrap;line-height:1;width:51px;text-align:right">-30</div>
<div style="position:absolute;left:343px;top:171.48000000000002px;font:11.5px 'Liberation Sans', sans-serif;color:#333;white-space:nowrap;line-height:1;width:51px;text-align:right">-40</div>
<div style="position:absolute;left:343px;top:197.8px;font:11.5px 'Liberation Sans', sans-serif;color:#333;white-space:nowrap;line-height:1;width:51px;text-align:right">-50</div>
<div style="position:absolute;left:343px;top:224.12px;font:11.5px 'Liberation Sans', sans-serif;color:#333;white-space:nowrap;line-height:1;width:51px;text-align:right">-60</div>
<div style="position:absolute;left:343px;top:250.44px;font:11.5px 'Liberation Sans', sans-serif;color:#333;white-space:nowrap;line-height:1;width:51px;text-align:right">-70</div>
<div style="position:absolute;left:343px;top:276.76px;font:11.5px 'Liberation Sans', sans-serif;color:#333;white-space:nowrap;line-height:1;width:51px;text-align:right">-80</div>
<div style="position:absolute;left:343px;top:303.08000000000004px;font:11.5px 'Liberation Sans', sans-serif;color:#333;white-space:nowrap;line-height:1;width:51px;text-align:right">-90</div>
<div style="position:absolute;left:343px;top:329.4px;font:11.5px 'Liberation Sans', sans-serif;color:#333;white-space:nowrap;line-height:1;width:51px;text-align:right">-100</div>
<div style="position:absolute;left:343px;top:355.72px;font:11.5px 'Liberation Sans', sans-serif;color:#333;white-space:nowrap;line-height:1;width:51px;text-align:right">-110</div>
<div style="position:absolute;left:343px;top:382.04px;font:11.5px 'Liberation Sans', sans-serif;color:#333;white-space:nowrap;line-height:1;width:51px;text-align:right">-120</div>
<div style="position:absolute;left:343px;top:408.36px;font:11.5px 'Liberation Sans', sans-serif;color:#333;white-space:nowrap;line-height:1;width:51px;text-align:right">-130</div>
<div style="position:absolute;left:343px;top:434.68px;font:11.5px 'Liberation Sans', sans-serif;color:#333;white-space:nowrap;line-height:1;width:51px;text-align:right">-140</div>
<div style="position:absolute;left:343px;top:461.0px;font:11.5px 'Liberation Sans', sans-serif;color:#333;white-space:nowrap;line-height:1;width:51px;text-align:right">-150</div>
<div style="position:absolute;left:369.2px;top:484.5px;font:11.5px 'Liberation Sans', sans-serif;color:#333;white-space:nowrap;line-height:1;width:60px;text-align:center">20</div>
<div style="position:absolute;left:399.4876965575772px;top:484.5px;font:11.5px 'Liberation Sans', sans-serif;color:#333;white-space:nowrap;line-height:1;width:60px;text-align:center">30</div>
<div style="position:absolute;left:437.64568149159044px;top:484.5px;font:11.5px 'Liberation Sans', sans-serif;color:#333;white-space:nowrap;line-height:1;width:60px;text-align:center">50</div>
<div style="position:absolute;left:489.42284074579527px;top:484.5px;font:11.5px 'Liberation Sans', sans-serif;color:#333;white-space:nowrap;line-height:1;width:60px;text-align:center">100</div>
<div style="position:absolute;left:541.2px;top:484.5px;font:11.5px 'Liberation Sans', sans-serif;color:#333;white-space:nowrap;line-height:1;width:60px;text-align:center">200</div>
<div style="position:absolute;left:571.4876965575772px;top:484.5px;font:11.5px 'Liberation Sans', sans-serif;color:#333;white-space:nowrap;line-height:1;width:60px;text-align:center">300</div>
<div style="position:absolute;left:609.6456814915905px;top:484.5px;font:11.5px 'Liberation Sans', sans-serif;color:#333;white-space:nowrap;line-height:1;width:60px;text-align:center">500</div>
<div style="position:absolute;left:661.4228407457952px;top:484.5px;font:11.5px 'Liberation Sans', sans-serif;color:#333;white-space:nowrap;line-height:1;width:60px;text-align:center">1k</div>
<div style="position:absolute;left:617.5px;top:496px;font:11.5px 'Liberation Sans', sans-serif;color:#333;white-space:nowrap;line-height:1;">Frequency (Hz)</div>
<div style="position:absolute;left:321.5px;top:255.0px;font:11.6px 'Liberation Sans', sans-serif;color:#333;white-space:nowrap;line-height:1;width:80px;text-align:center;transform:rotate(-90deg)">Level (dBrA)</div>
<div style="position:absolute;left:0px;top:512px;width:700px;height:2.5px;background:#a2a2a2;"></div>
<div style="position:absolute;left:0px;top:514.5px;width:700px;height:7px;background:#4a7886;"></div>
<div style="position:absolute;left:341.8px;top:516.8px;width:2.4px;height:2.4px;background:#c8d6da;border-radius:1px"></div>
<div style="position:absolute;left:348.1px;top:516.8px;width:2.4px;height:2.4px;background:#c8d6da;border-radius:1px"></div>
<div style="position:absolute;left:354.5px;top:516.8px;width:2.4px;height:2.4px;background:#c8d6da;border-radius:1px"></div>
<div style="position:absolute;left:0px;top:521.5px;width:700px;height:25.5px;background:#d9d9d9;"></div>
<div style="position:absolute;left:0px;top:526px;width:5.8px;height:15.5px;background:#2d4451;"></div>
<div style="position:absolute;left:0px;top:532.6px;width:1.3px;height:2.2px;background:#dfe6ea;"></div>
<div style="position:absolute;left:8.5px;top:527.5px;font:12.5px 'Liberation Sans', sans-serif;color:#111;white-space:nowrap;line-height:1;">Regulate</div>
<div style="position:absolute;left:0px;top:547px;width:700px;height:2px;background:#a8a8a8;"></div>
<div style="position:absolute;left:0px;top:549px;width:334px;height:25px;background:#dde4e7;"></div>
<div style="position:absolute;left:286px;top:551px;width:1px;height:21px;background:#eef2f3;"></div>
<svg style="position:absolute;left:293px;top:555px" width="13" height="12" viewBox="0 0 13 12"><path d="M5,1 H1 V11 H11.5 V7.5" fill="none" stroke="#2b3f5a" stroke-width="2"/><path d="M5,7.5 L11,1.5" fill="none" stroke="#2b3f5a" stroke-width="2"/><path d="M6.5,0.5 H12 V6 Z" fill="#2b3f5a"/></svg>
<svg style="position:absolute;left:316px;top:556px" width="12" height="11" viewBox="0 0 12 11"><path d="M1,0.5 L11,10.5 M11,0.5 L1,10.5" stroke="#27333d" stroke-width="2"/></svg>
<div style="position:absolute;left:0px;top:574px;width:334px;height:1px;background:#c2c8ca;"></div>
<div style="position:absolute;left:0px;top:575px;width:334px;height:5px;background:#f2f4f5;"></div>
<div style="position:absolute;left:0px;top:580px;width:326px;height:40px;background:#000;"></div>
<div style="position:absolute;left:326px;top:579px;width:8px;height:126px;background:#dde4e7;"></div>
<div style="position:absolute;left:0px;top:620px;width:326px;height:17px;background:#8c8c8c;"></div>
<div style="position:absolute;left:0px;top:620px;width:252px;height:17px;background:#1fe31f;"></div>
<div style="position:absolute;left:0px;top:626px;width:252px;height:3.5px;background:#000;opacity:0.92"></div>
<div style="position:absolute;left:0px;top:641px;width:326px;height:17px;background:#8c8c8c;"></div>
<div style="position:absolute;left:0px;top:641px;width:252px;height:17px;background:#1fe31f;"></div>
<div style="position:absolute;left:0px;top:648px;width:252px;height:3.5px;background:#000;opacity:0.92"></div>
<div style="position:absolute;left:0px;top:637px;width:326px;height:1.2px;background:#333;"></div>
<div style="position:absolute;left:0px;top:638.2px;width:326px;height:2.8px;background:#c8c8c8;"></div>
<div style="position:absolute;left:0px;top:658px;width:326px;height:43px;background:#000;"></div>
<div style="position:absolute;left:0px;top:701px;width:334px;height:3px;background:#e9eced;"></div>
<div style="position:absolute;left:0px;top:704px;width:700px;height:8px;background:#a9a9a9;"></div>
<div style="position:absolute;left:192px;top:582px;font:35px 'Liberation Sans', sans-serif;color:#1fe31f;white-space:nowrap;line-height:1;transform:scaleX(0.858);transform-origin:0 0;letter-spacing:0.0px;-webkit-text-stroke:0.25px #000">5.006</div>
<div style="position:absolute;left:291px;top:582px;font:35px 'Liberation Sans', sans-serif;color:#1fe31f;white-space:nowrap;line-height:1;transform:scaleX(0.93);transform-origin:0 0;-webkit-text-stroke:0.25px #000">W</div>
<div style="position:absolute;left:192px;top:662px;font:35px 'Liberation Sans', sans-serif;color:#1fe31f;white-space:nowrap;line-height:1;transform:scaleX(0.858);transform-origin:0 0;letter-spacing:0.0px;-webkit-text-stroke:0.25px #000">5.002</div>
<div style="position:absolute;left:291px;top:662px;font:35px 'Liberation Sans', sans-serif;color:#1fe31f;white-space:nowrap;line-height:1;transform:scaleX(0.93);transform-origin:0 0;-webkit-text-stroke:0.25px #000">W</div>
<div style="position:absolute;left:334px;top:549px;width:6px;height:156px;background:#a9abac;"></div>
<div style="position:absolute;left:340px;top:549px;width:360px;height:25px;background:#dde4e7;"></div>
<div style="position:absolute;left:340px;top:549px;width:1.5px;height:156px;background:#c9cfd1;"></div>
<div style="position:absolute;left:345px;top:555px;font:bold 14px 'Liberation Sans', sans-serif;color:#111;white-space:nowrap;line-height:1;transform:scaleX(1.14);transform-origin:0 0">THD+N Ratio</div>
<div style="position:absolute;left:450px;top:549px;width:75px;height:25px;background:#fff;"></div>
<div style="position:absolute;left:455px;top:556px;font:12.5px 'Liberation Sans', sans-serif;color:#333;white-space:nowrap;line-height:1;">%</div>
<svg style="position:absolute;left:517px;top:561px" width="5" height="3"><path d="M0,0H5L2.5,3Z" fill="#333"/></svg>
<svg style="position:absolute;left:528px;top:553.5px" width="24" height="15" viewBox="0 0 24 15"><rect width="16" height="15" fill="#2d4451"/><path d="M2,4 H14 M2,12 H14" stroke="#fff" stroke-width="1.5"/><path d="M2,11 L6,6 L9,9 L14,5" stroke="#c8d0d4" stroke-width="1" fill="none"/><path d="M18,6.5 H23 L20.5,9.5 Z" fill="#222"/></svg>
<svg style="position:absolute;left:558px;top:553.5px" width="15" height="15" viewBox="0 0 15 15"><rect width="15" height="15" fill="#2d4451"/><rect x="6.20" y="1.60" width="2.6" height="3" fill="#fff" transform="rotate(0 7.5 7.5)"/><rect x="6.20" y="1.60" width="2.6" height="3" fill="#fff" transform="rotate(45 7.5 7.5)"/><rect x="6.20" y="1.60" width="2.6" height="3" fill="#fff" transform="rotate(90 7.5 7.5)"/><rect x="6.20" y="1.60" width="2.6" height="3" fill="#fff" transform="rotate(135 7.5 7.5)"/><rect x="6.20" y="1.60" width="2.6" height="3" fill="#fff" transform="rotate(180 7.5 7.5)"/><rect x="6.20" y="1.60" width="2.6" height="3" fill="#fff" transform="rotate(225 7.5 7.5)"/><rect x="6.20" y="1.60" width="2.6" height="3" fill="#fff" transform="rotate(270 7.5 7.5)"/><rect x="6.20" y="1.60" width="2.6" height="3" fill="#fff" transform="rotate(315 7.5 7.5)"/><circle cx="7.5" cy="7.5" r="4.2" fill="#fff"/><circle cx="7.5" cy="7.5" r="1.5" fill="#2d4451"/></svg>
<div style="position:absolute;left:341.5px;top:574px;width:358.5px;height:1px;background:#c2c8ca;"></div>
<div style="position:absolute;left:341.5px;top:575px;width:358.5px;height:5px;background:#f2f4f5;"></div>
<div style="position:absolute;left:346.5px;top:591px;font:35px 'Liberation Sans', sans-serif;color:#111;white-space:nowrap;line-height:1;transform:scaleX(0.81);transform-origin:0 0;-webkit-text-stroke:0.4px #dde4e7">Ch1</div>
<div style="position:absolute;left:346.5px;top:653px;font:35px 'Liberation Sans', sans-serif;color:#111;white-space:nowrap;line-height:1;transform:scaleX(0.81);transform-origin:0 0;-webkit-text-stroke:0.4px #dde4e7">Ch2</div>
<svg style="position:absolute;left:475px;top:604px" width="11" height="9"><path d="M0,0H11L5.5,9Z" fill="#111"/></svg>
<svg style="position:absolute;left:475px;top:667px" width="11" height="9"><path d="M0,0H11L5.5,9Z" fill="#111"/></svg>
<div style="position:absolute;left:341.5px;top:638.5px;width:146.5px;height:1.2px;background:#9aa0a2;"></div>
<div style="position:absolute;left:488px;top:580px;width:212px;height:40px;background:#000;"></div>
<div style="position:absolute;left:488px;top:620px;width:212px;height:17px;background:#8c8c8c;"></div>
<div style="position:absolute;left:488px;top:620px;width:39px;height:17px;background:#1fe31f;"></div>
<div style="position:absolute;left:519px;top:626px;width:181px;height:3.5px;background:#000;opacity:0.92"></div>
<div style="position:absolute;left:488px;top:641px;width:212px;height:17px;background:#8c8c8c;"></div>
<div style="position:absolute;left:488px;top:641px;width:39px;height:17px;background:#1fe31f;"></div>
<div style="position:absolute;left:515px;top:647.5px;width:185px;height:3.5px;background:#000;opacity:0.92"></div>
<div style="position:absolute;left:488px;top:637px;width:212px;height:1.2px;background:#333;"></div>
<div style="position:absolute;left:488px;top:638.2px;width:212px;height:2.8px;background:#c8c8c8;"></div>
<div style="position:absolute;left:488px;top:658px;width:212px;height:43px;background:#000;"></div>
<div style="position:absolute;left:340px;top:701px;width:360px;height:3px;background:#e9eced;"></div>
<div style="position:absolute;left:0px;top:711px;width:334px;height:25px;background:#dde4e7;"></div>
<div style="position:absolute;left:286px;top:713px;width:1px;height:21px;background:#eef2f3;"></div>
<svg style="position:absolute;left:293px;top:717px" width="13" height="12" viewBox="0 0 13 12"><path d="M5,1 H1 V11 H11.5 V7.5" fill="none" stroke="#2b3f5a" stroke-width="2"/><path d="M5,7.5 L11,1.5" fill="none" stroke="#2b3f5a" stroke-width="2"/><path d="M6.5,0.5 H12 V6 Z" fill="#2b3f5a"/></svg>
<svg style="position:absolute;left:316px;top:718px" width="12" height="11" viewBox="0 0 12 11"><path d="M1,0.5 L11,10.5 M11,0.5 L1,10.5" stroke="#27333d" stroke-width="2"/></svg>
<div style="position:absolute;left:0px;top:736px;width:334px;height:1px;background:#c2c8ca;"></div>
<div style="position:absolute;left:0px;top:737px;width:334px;height:5px;background:#f2f4f5;"></div>
<div style="position:absolute;left:0px;top:742px;width:326px;height:40px;background:#000;"></div>
<div style="position:absolute;left:326px;top:741px;width:8px;height:126px;background:#dde4e7;"></div>
<div style="position:absolute;left:0px;top:782px;width:326px;height:17px;background:#8c8c8c;"></div>
<div style="position:absolute;left:0px;top:782px;width:144px;height:17px;background:#1fe31f;"></div>
<div style="position:absolute;left:0px;top:788px;width:305px;height:3.5px;background:#000;opacity:0.92"></div>
<div style="position:absolute;left:0px;top:803px;width:326px;height:17px;background:#8c8c8c;"></div>
<div style="position:absolute;left:0px;top:803px;width:144px;height:17px;background:#1fe31f;"></div>
<div style="position:absolute;left:0px;top:810px;width:312px;height:3.5px;background:#000;opacity:0.92"></div>
<div style="position:absolute;left:0px;top:799px;width:326px;height:1.2px;background:#333;"></div>
<div style="position:absolute;left:0px;top:800.2px;width:326px;height:2.8px;background:#c8c8c8;"></div>
<div style="position:absolute;left:0px;top:820px;width:326px;height:43px;background:#000;"></div>
<div style="position:absolute;left:0px;top:863px;width:334px;height:3px;background:#e9eced;"></div>
<div style="position:absolute;left:0px;top:866px;width:700px;height:4px;background:#a9a9a9;"></div>
<div style="position:absolute;left:129.4px;top:744px;font:35px 'Liberation Sans', sans-serif;color:#1fe31f;white-space:nowrap;line-height:1;transform:scaleX(0.86);transform-origin:0 0;letter-spacing:0.0px;-webkit-text-stroke:0.25px #000">1.00018</div>
<div style="position:absolute;left:268.4px;top:744px;font:35px 'Liberation Sans', sans-serif;color:#1fe31f;white-space:nowrap;line-height:1;transform:scaleX(0.91);transform-origin:0 0;-webkit-text-stroke:0.25px #000">kHz</div>
<div style="position:absolute;left:129.4px;top:824px;font:35px 'Liberation Sans', sans-serif;color:#1fe31f;white-space:nowrap;line-height:1;transform:scaleX(0.86);transform-origin:0 0;letter-spacing:0.0px;-webkit-text-stroke:0.25px #000">1.00018</div>
<div style="position:absolute;left:268.4px;top:824px;font:35px 'Liberation Sans', sans-serif;color:#1fe31f;white-space:nowrap;line-height:1;transform:scaleX(0.91);transform-origin:0 0;-webkit-text-stroke:0.25px #000">kHz</div>
<div style="position:absolute;left:334px;top:711px;width:6px;height:156px;background:#a9abac;"></div>
<div style="position:absolute;left:340px;top:711px;width:360px;height:25px;background:#dde4e7;"></div>
<div style="position:absolute;left:340px;top:711px;width:1.5px;height:156px;background:#c9cfd1;"></div>
<div style="position:absolute;left:345px;top:717px;font:bold 14px 'Liberation Sans', sans-serif;color:#111;white-space:nowrap;line-height:1;transform:scaleX(1.15);transform-origin:0 0">SINAD</div>
<div style="position:absolute;left:400px;top:711px;width:74.5px;height:25px;background:#fff;"></div>
<div style="position:absolute;left:405px;top:718px;font:12.5px 'Liberation Sans', sans-serif;color:#333;white-space:nowrap;line-height:1;">dB</div>
<svg style="position:absolute;left:466.5px;top:723px" width="5" height="3"><path d="M0,0H5L2.5,3Z" fill="#333"/></svg>
<svg style="position:absolute;left:477.5px;top:715.5px" width="24" height="15" viewBox="0 0 24 15"><rect width="16" height="15" fill="#2d4451"/><path d="M2,4 H14 M2,12 H14" stroke="#fff" stroke-width="1.5"/><path d="M2,11 L6,6 L9,9 L14,5" stroke="#c8d0d4" stroke-width="1" fill="none"/><path d="M18,6.5 H23 L20.5,9.5 Z" fill="#222"/></svg>
<svg style="position:absolute;left:507.5px;top:715.5px" width="15" height="15" viewBox="0 0 15 15"><rect width="15" height="15" fill="#2d4451"/><rect x="6.20" y="1.60" width="2.6" height="3" fill="#fff" transform="rotate(0 7.5 7.5)"/><rect x="6.20" y="1.60" width="2.6" height="3" fill="#fff" transform="rotate(45 7.5 7.5)"/><rect x="6.20" y="1.60" width="2.6" height="3" fill="#fff" transform="rotate(90 7.5 7.5)"/><rect x="6.20" y="1.60" width="2.6" height="3" fill="#fff" transform="rotate(135 7.5 7.5)"/><rect x="6.20" y="1.60" width="2.6" height="3" fill="#fff" transform="rotate(180 7.5 7.5)"/><rect x="6.20" y="1.60" width="2.6" height="3" fill="#fff" transform="rotate(225 7.5 7.5)"/><rect x="6.20" y="1.60" width="2.6" height="3" fill="#fff" transform="rotate(270 7.5 7.5)"/><rect x="6.20" y="1.60" width="2.6" height="3" fill="#fff" transform="rotate(315 7.5 7.5)"/><circle cx="7.5" cy="7.5" r="4.2" fill="#fff"/><circle cx="7.5" cy="7.5" r="1.5" fill="#2d4451"/></svg>
<div style="position:absolute;left:341.5px;top:736px;width:358.5px;height:1px;background:#c2c8ca;"></div>
<div style="position:absolute;left:341.5px;top:737px;width:358.5px;height:5px;background:#f2f4f5;"></div>
<div style="position:absolute;left:346.5px;top:753px;font:35px 'Liberation Sans', sans-serif;color:#111;white-space:nowrap;line-height:1;transform:scaleX(0.81);transform-origin:0 0;-webkit-text-stroke:0.4px #dde4e7">Ch1</div>
<div style="position:absolute;left:346.5px;top:815px;font:35px 'Liberation Sans', sans-serif;color:#111;white-space:nowrap;line-height:1;transform:scaleX(0.81);transform-origin:0 0;-webkit-text-stroke:0.4px #dde4e7">Ch2</div>
<svg style="position:absolute;left:475px;top:766px" width="11" height="9"><path d="M0,0H11L5.5,9Z" fill="#111"/></svg>
<svg style="position:absolute;left:475px;top:829px" width="11" height="9"><path d="M0,0H11L5.5,9Z" fill="#111"/></svg>
<div style="position:absolute;left:341.5px;top:800.5px;width:146.5px;height:1.2px;background:#9aa0a2;"></div>
<div style="position:absolute;left:488px;top:742px;width:212px;height:40px;background:#000;"></div>
<div style="position:absolute;left:488px;top:782px;width:212px;height:17px;background:#8c8c8c;"></div>
<div style="position:absolute;left:488px;top:782px;width:212px;height:17px;background:#1fe31f;"></div>
<div style="position:absolute;left:488px;top:788px;width:212px;height:3.5px;background:#000;opacity:0.92"></div>
<div style="position:absolute;left:488px;top:803px;width:212px;height:17px;background:#8c8c8c;"></div>
<div style="position:absolute;left:488px;top:803px;width:212px;height:17px;background:#1fe31f;"></div>
<div style="position:absolute;left:488px;top:809.5px;width:212px;height:3.5px;background:#000;opacity:0.92"></div>
<div style="position:absolute;left:488px;top:799px;width:212px;height:1.2px;background:#333;"></div>
<div style="position:absolute;left:488px;top:800.2px;width:212px;height:2.8px;background:#c8c8c8;"></div>
<div style="position:absolute;left:488px;top:820px;width:212px;height:43px;background:#000;"></div>
<div style="position:absolute;left:340px;top:863px;width:360px;height:3px;background:#e9eced;"></div>
<div style="position:absolute;left:0px;top:862.5px;width:700px;height:5px;background:#dde4e7;"></div>
<div style="position:absolute;left:334px;top:862.5px;width:6px;height:5px;background:#a9abac;"></div>
<div style="position:absolute;left:0px;top:867.2px;width:700px;height:1.3px;background:#a9b0b3;"></div>
<div style="position:absolute;left:0px;top:868.5px;width:700px;height:19.5px;background:#eeeeee;"></div>
<div style="position:absolute;left:278.5px;top:873.5px;font:12.5px 'Liberation Sans', sans-serif;color:#222;white-space:nowrap;line-height:1;letter-spacing:0px">Output:</div>
<div style="position:absolute;left:328px;top:871.5px;width:184.5px;height:17px;background:#000;"></div>
<div style="position:absolute;left:331.5px;top:873.5px;font:12.6px 'Liberation Sans', sans-serif;color:#3cc03c;white-space:nowrap;line-height:1;letter-spacing:0.15px">Analog Balanced 2 Ch, 40 ohm</div>
<div style="position:absolute;left:519.5px;top:873.5px;font:12.5px 'Liberation Sans', sans-serif;color:#222;white-space:nowrap;line-height:1;letter-spacing:0px">Input:</div>
<div style="position:absolute;left:559px;top:871.5px;width:141px;height:17px;background:#000;"></div>
<div style="position:absolute;left:562.5px;top:873.5px;font:12.6px 'Liberation Sans', sans-serif;color:#3cc03c;white-space:nowrap;line-height:1;letter-spacing:0.15px">Analog Balanced 2 Ch, 2</div>
</body></html>
